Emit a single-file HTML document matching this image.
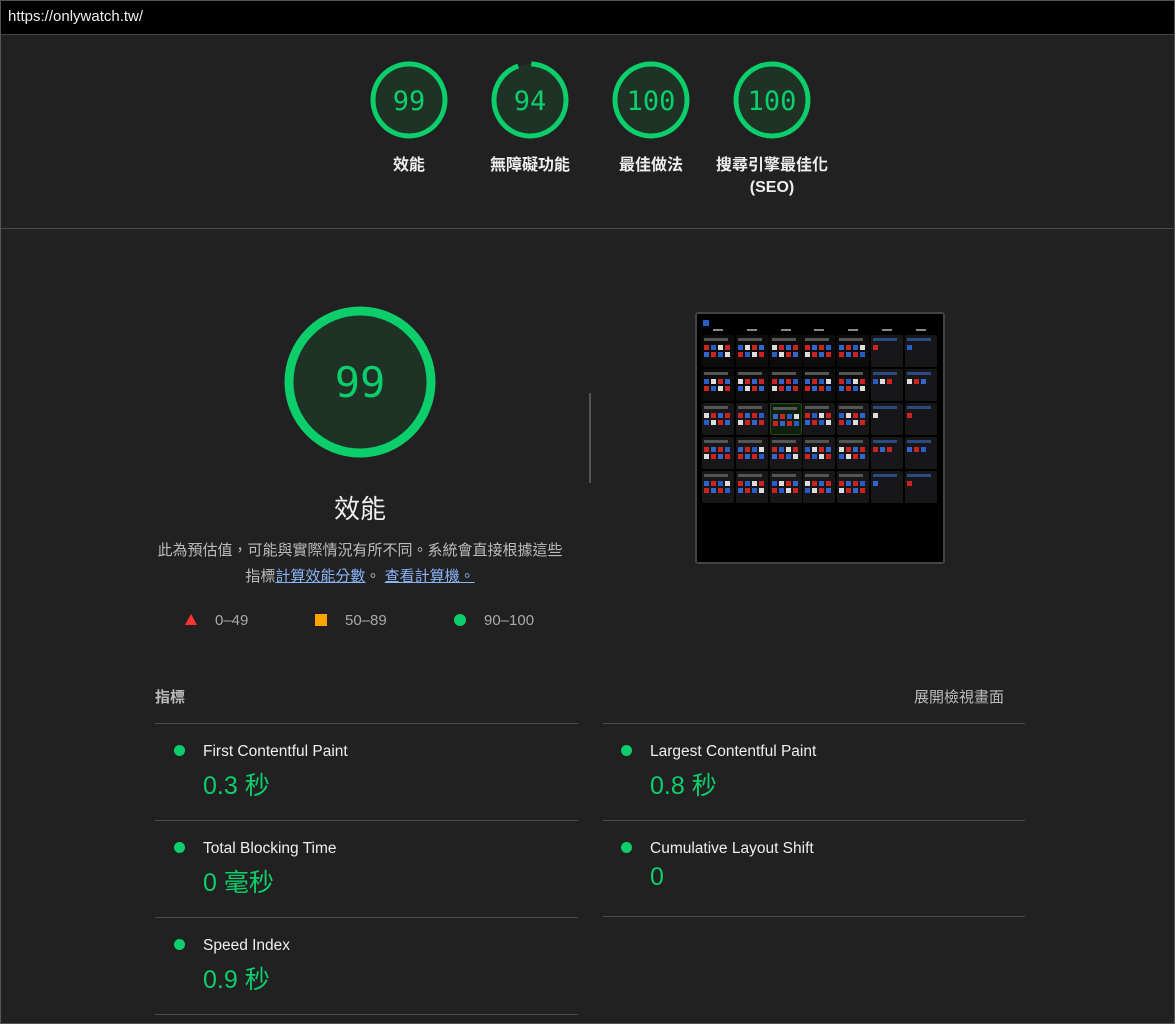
<!DOCTYPE html><html><head><meta charset="utf-8"><style>
*{margin:0;padding:0;box-sizing:border-box}
body{width:1175px;height:1024px;background:#212121;font-family:"Liberation Sans","Noto Sans CJK TC",sans-serif;position:relative;overflow:hidden;color:#fff}
.a{position:absolute}
.top{left:0;top:0;width:1175px;height:35px;background:#000;border-bottom:1px solid #444;font-size:15px;color:#eee;padding:8px 0 0 8px}
.frame{left:0;top:0;width:1175px;height:1024px;border:1px solid #555;pointer-events:none}
.g{width:80px;text-align:center}
.g svg{display:block;margin:0 auto}
.gl{font-size:16px;font-weight:bold;color:#eee;margin-top:15px;line-height:22px;white-space:nowrap;margin-left:-40px;width:160px}
.num{font-family:"DejaVu Sans Mono","Liberation Mono",monospace;fill:#0cce6b}
.line{height:1px;background:#4a4a4a}
.mt{font-size:15.5px;color:#eee}
.mv{font-size:25px;color:#0cce6b}
.dot{width:11px;height:11px;border-radius:50%;background:#0cce6b}
</style></head><body>
<div class="a top">https://onlywatch.tw/</div>
<div class="a g" style="left:369px;top:60px"><svg width="80" height="80"><circle cx="40" cy="40" r="36" fill="#1e3326" stroke="#0cce6b" stroke-width="5"/><text x="40" y="50" text-anchor="middle" font-size="27" class="num">99</text></svg><div class="gl">效能</div></div>
<div class="a g" style="left:490px;top:60px"><svg width="80" height="80"><circle cx="40" cy="40" r="36" fill="#1e3326"/><circle cx="40" cy="40" r="36" fill="none" stroke="#0cce6b" stroke-width="5" stroke-dasharray="212.6 14" transform="rotate(-88 40 40)"/><text x="40" y="50" text-anchor="middle" font-size="27" class="num">94</text></svg><div class="gl">無障礙功能</div></div>
<div class="a g" style="left:611px;top:60px"><svg width="80" height="80"><circle cx="40" cy="40" r="36" fill="#1e3326" stroke="#0cce6b" stroke-width="5"/><text x="40" y="50" text-anchor="middle" font-size="27" class="num">100</text></svg><div class="gl">最佳做法</div></div>
<div class="a g" style="left:732px;top:60px"><svg width="80" height="80"><circle cx="40" cy="40" r="36" fill="#1e3326" stroke="#0cce6b" stroke-width="5"/><text x="40" y="50" text-anchor="middle" font-size="27" class="num">100</text></svg><div class="gl">搜尋引擎最佳化<br>(SEO)</div></div>
<div class="a line" style="left:1px;top:228px;width:1173px"></div>
<svg class="a" style="left:284px;top:306px" width="152" height="152"><circle cx="76" cy="76" r="71" fill="#1e3326" stroke="#0cce6b" stroke-width="9"/><text x="76" y="91" text-anchor="middle" font-size="42" class="num">99</text></svg>
<div class="a" style="left:160px;top:489px;width:400px;text-align:center;font-size:26px;color:#eee">效能</div>
<div class="a" style="left:140px;top:538px;width:440px;text-align:center;font-size:15px;line-height:26px;color:#bbb">此為預估值，可能與實際情況有所不同。系統會直接根據這些<br>指標<span style="color:#8ab4f8;text-decoration:underline">計算效能分數</span>。 <span style="color:#8ab4f8;text-decoration:underline">查看計算機。</span></div>
<svg class="a" style="left:185px;top:614px" width="12" height="12"><polygon points="6,0 12,11 0,11" fill="#f33"/></svg>
<div class="a" style="left:215px;top:612px;font-size:15px;color:#aaa">0–49</div>
<div class="a" style="left:315px;top:614px;width:12px;height:12px;background:#ffa400"></div>
<div class="a" style="left:345px;top:612px;font-size:15px;color:#aaa">50–89</div>
<div class="a dot" style="left:454px;top:614px;width:12px;height:12px"></div>
<div class="a" style="left:484px;top:612px;font-size:15px;color:#aaa">90–100</div>
<div class="a" style="left:589px;top:393px;width:2px;height:90px;background:#555"></div>
<div class="a" style="left:695px;top:312px;width:250px;height:252px;border:2px solid #444;border-radius:3px;background:#000;padding:4px">
<div id="th" style="position:relative;width:238px;height:240px;background:#000"></div></div>
<div class="a" style="left:155px;top:686px;font-size:15px;color:#bbb;font-weight:bold">指標</div>
<div class="a" style="left:914px;top:686px;font-size:15px;color:#bbb">展開檢視畫面</div>
<div class="a line" style="left:155px;top:723px;width:423px"></div>
<div class="a line" style="left:603px;top:723px;width:422px"></div>
<div class="a line" style="left:155px;top:820px;width:423px"></div>
<div class="a line" style="left:603px;top:820px;width:422px"></div>
<div class="a line" style="left:155px;top:917px;width:423px"></div>
<div class="a line" style="left:603px;top:916px;width:422px"></div>
<div class="a line" style="left:155px;top:1014px;width:423px"></div>
<div class="a dot" style="left:174px;top:745px"></div><div class="a mt" style="left:203px;top:743px">First Contentful Paint</div><div class="a mv" style="left:203px;top:766px">0.3 秒</div>
<div class="a dot" style="left:621px;top:745px"></div><div class="a mt" style="left:650px;top:743px">Largest Contentful Paint</div><div class="a mv" style="left:650px;top:766px">0.8 秒</div>
<div class="a dot" style="left:174px;top:842px"></div><div class="a mt" style="left:203px;top:840px">Total Blocking Time</div><div class="a mv" style="left:203px;top:863px">0 毫秒</div>
<div class="a dot" style="left:621px;top:842px"></div><div class="a mt" style="left:650px;top:840px">Cumulative Layout Shift</div><div class="a mv" style="left:650px;top:863px">0</div>
<div class="a dot" style="left:174px;top:939px"></div><div class="a mt" style="left:203px;top:937px">Speed Index</div><div class="a mv" style="left:203px;top:960px">0.9 秒</div>
<div class="a frame"></div>
<script>
var th=document.getElementById('th'),h='<div style="position:absolute;left:2px;top:2px;width:6px;height:6px;background:#2a5cc8"></div>';
var cols=['#c22','#2a5cc8','#ddd','#c22','#36c'];
for(var r=0;r<5;r++)for(var c=0;c<7;c++){var x=1+c*33.8,y=17+r*34;var bg=(c>4||r>=2)?'#17171a':'#0c0c0c';if(r==2&&c==2)bg='#10200f';
h+='<div style="position:absolute;left:'+x+'px;top:'+y+'px;width:32px;height:32px;background:'+bg+';border-radius:2px'+(r==2&&c==2?';border:1px solid #2a4a1a':'')+'">';
h+='<div style="position:absolute;left:2px;top:3px;width:24px;height:3px;background:'+(c>4?'#2a4a80':'#555')+'"></div>';
var n=(c>4)?(r%2?3:1):8;for(var k=0;k<n;k++){h+='<div style="position:absolute;left:'+(2+(k%4)*7)+'px;top:'+(10+Math.floor(k/4)*7)+'px;width:5px;height:5px;background:'+cols[(k+r+c)%5]+'"></div>';}
h+='</div>';}
for(var c=0;c<7;c++)h+='<div style="position:absolute;left:'+(12+c*33.8)+'px;top:11px;width:10px;height:2px;background:#888"></div>';
th.innerHTML=h;
</script>
</body></html>
